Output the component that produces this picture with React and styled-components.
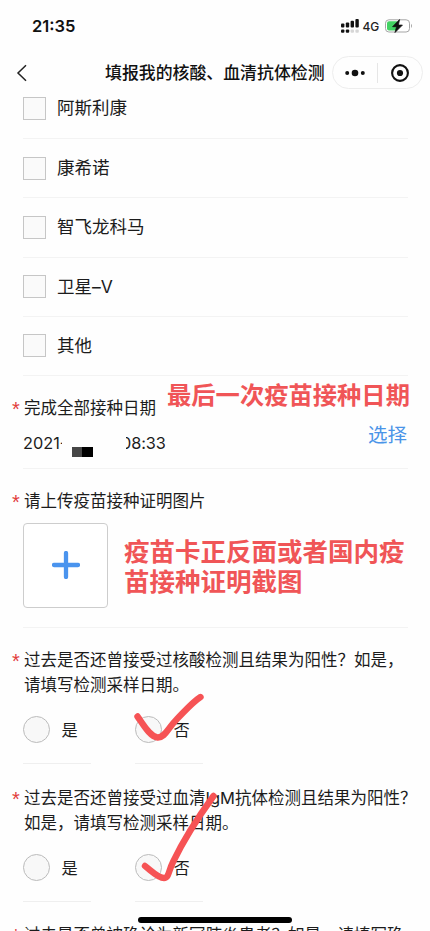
import React from "react";
import styled, { createGlobalStyle } from "styled-components";

const GlobalStyle = createGlobalStyle`
  * { box-sizing: border-box; }
  html, body { margin: 0; padding: 0; background: #fefefe; }
  body {
    font-family: Inter, "Noto Sans CJK SC", sans-serif;
    color: #1c1c1c;
    overflow: hidden;
  }
`;

const Screen = styled.div`
  position: relative;
  width: 430px;
  height: 931px;
  overflow: hidden;
  display: flex;
  flex-direction: column;
  background: #fefefe;
`;

const StatusBar = styled.header`
  flex: none;
  height: 52px;
  padding: 0 17px 0 32px;
  display: flex;
  align-items: center;
  justify-content: space-between;
`;

const Clock = styled.span`
  font-size: 16.5px;
  font-weight: 600;
  color: #111;
`;

const StatusIcons = styled.div`
  display: flex;
  align-items: center;
  height: 20px;
`;

const Network = styled.span`
  margin: 0 6px 0 4px;
  font-size: 12px;
  font-weight: 500;
  letter-spacing: -0.2px;
  color: #222;
`;

const NavBar = styled.nav`
  flex: none;
  height: 41px;
  padding: 0 7px 0 16px;
  display: flex;
  align-items: center;
`;

const BackIcon = styled.svg`
  flex: none;
  width: 12px;
  height: 18px;
`;

const Title = styled.h1`
  flex: none;
  width: 221px;
  margin: 0 6px 0 77px;
  font-size: 16.9px;
  line-height: 24px;
  font-weight: 500;
  color: #111;
  white-space: nowrap;
`;

const Capsule = styled.div`
  flex: none;
  width: 91px;
  height: 33px;
  border: 1px solid #ededed;
  border-radius: 17px;
  display: flex;
  align-items: center;
`;

const CapsuleButton = styled.button`
  flex: 1;
  height: 20px;
  padding: 0;
  border: 0;
  border-left: ${(p) => (p.$divided ? "1px solid #e6e6e6" : "0")};
  background: none;
  display: flex;
  align-items: center;
  justify-content: center;
`;

const OptionRow = styled.label`
  flex: none;
  height: ${(p) => (p.$first ? 46 : 59.25)}px;
  margin: 0 22px 0 23px;
  padding-bottom: ${(p) => (p.$first ? 15 : 0)}px;
  border-bottom: 1px solid #f3f3f3;
  display: flex;
  align-items: center;
  gap: 11px;
`;

const CheckBox = styled.span`
  flex: none;
  width: 23px;
  height: 23px;
  border: 1px solid #c6c6c6;
  background: #fafafa;
`;

const OptionText = styled.span`
  font-size: 17.5px;
  line-height: 26px;
  white-space: nowrap;
`;

const Section = styled.section`
  flex: none;
  position: relative;
  height: ${(p) => p.$height}px;
  padding: ${(p) => p.$top}px 22px 0 23px;
`;

const Rule = styled.hr`
  flex: none;
  width: 385px;
  height: 1px;
  margin: 0 0 0 23px;
  border: 0;
  background: #f3f3f3;
`;

const Question = styled.div`
  display: flex;
  margin-left: -11px;
  font-size: 16.5px;
  line-height: 25px;
  white-space: nowrap;
`;

const Star = styled.span`
  flex: none;
  width: 12px;
  height: 25px;
  color: #e23c3c;
  font-family: "Liberation Sans", sans-serif;
  font-size: 20px;
  line-height: 26px;
`;

const DateRow = styled.div`
  display: flex;
  align-items: center;
  height: 28px;
  margin-top: 8px;
  font-size: 16.3px;
`;

const Year = styled.span`
  width: 49px;
  overflow: hidden;
  white-space: nowrap;
  clip-path: inset(0 10px 0 0);
`;

const Mosaic = styled.span`
  width: 21px;
  height: 10px;
  margin-top: 17px;
  background: linear-gradient(90deg, #464646 50%, #000 50%);
`;

const Time = styled.span`
  margin-left: 28px;
  clip-path: inset(0 0 0 5px);
  letter-spacing: -0.1px;
`;

const Pick = styled.a`
  margin: -17px 1px 0 auto;
  color: #4a94e8;
  font-size: 19.5px;
  line-height: 28px;
`;

const Note = styled.p`
  position: absolute;
  margin: 0;
  left: ${(p) => p.$x}px;
  top: ${(p) => p.$y}px;
  font-size: ${(p) => p.$size}px;
  line-height: 30px;
  font-weight: 700;
  color: #f05557;
  white-space: nowrap;
`;

const Upload = styled.button`
  display: flex;
  align-items: center;
  justify-content: center;
  width: 85px;
  height: 85px;
  margin-top: 9px;
  padding: 0 0 1px;
  border: 1px solid #cdcdcd;
  border-radius: 4px;
  background: #fff;
`;

const Choices = styled.div`
  display: flex;
  gap: 44px;
  margin-top: 12px;
`;

const Choice = styled.label`
  width: 68px;
  height: 54px;
  padding-top: 6px;
  border-bottom: 1px solid #efefef;
  display: flex;
  gap: 11.5px;
  font-size: 16.2px;
  line-height: 28px;
`;

const Radio = styled.span`
  flex: none;
  width: 27px;
  height: 27px;
  border: 1px solid #bbb;
  border-radius: 50%;
  background: #f8f8f8;
`;

const Tick = styled.svg`
  position: absolute;
  left: 130px;
  top: ${(p) => p.$y}px;
  width: 95px;
  height: ${(p) => p.$h}px;
  overflow: visible;
  pointer-events: none;
`;

const HomeBar = styled.div`
  position: absolute;
  left: 138px;
  top: 917px;
  width: 154px;
  height: 5.5px;
  border-radius: 3px;
  background: #000;
`;

const OPTIONS = ["阿斯利康", "康希诺", "智飞龙科马", "卫星–V", "其他"];

function Signal() {
  const bars = [
    [0, 4.6, 4],
    [4.8, 3.4, 5.2],
    [9.6, 1.7, 6.9],
    [14.4, 0, 8.6],
  ];
  return (
    <svg width="18" height="15" viewBox="0 0 18 15">
      {bars.map(([x, y, h], i) => (
        <g key={x}>
          <rect x={x} y={y} width="3.4" height={h} rx="1" fill="#111" />
          <rect x={x} y="10.5" width="3.4" height="3.2" rx="1" fill={i < 2 ? "#111" : "#d6d6d6"} />
        </g>
      ))}
    </svg>
  );
}

function Battery() {
  return (
    <svg width="28" height="14" viewBox="0 0 28 14">
      <rect x="0.5" y="0.8" width="24" height="12.2" rx="3.4" fill="#fff" stroke="#a5a5a5" />
      <path d="M4 2.3H12V11.5H4Q2 11.5 2 9.5V4.3Q2 2.3 4 2.3Z" fill="#43d263" />
      <path d="M26 4.8Q28 6.9 26 9Z" fill="#a5a5a5" />
      <path d="M14.5 .6L7.6 7.7H11.6L10 13.5L17.4 6.1H13.4Z" fill="#111" stroke="#111" strokeWidth=".8" strokeLinejoin="round" />
    </svg>
  );
}

function YesNo({ lines }) {
  return (
    <>
      <Question>
        <Star>*</Star>
        <div>
          {lines.map((line) => (
            <div key={line}>{line}</div>
          ))}
        </div>
      </Question>
      <Choices>
        {["是", "否"].map((text) => (
          <Choice key={text}>
            <Radio />
            {text}
          </Choice>
        ))}
      </Choices>
    </>
  );
}

export default function App() {
  return (
    <Screen>
      <GlobalStyle />
      <StatusBar>
        <Clock>21:35</Clock>
        <StatusIcons>
          <Signal />
          <Network>4G</Network>
          <Battery />
        </StatusIcons>
      </StatusBar>
      <NavBar>
        <BackIcon viewBox="0 0 12 18">
          <path d="M10 1.2L2 9L10 16.8" fill="none" stroke="#222" strokeWidth="1.5" />
        </BackIcon>
        <Title>填报我的核酸、血清抗体检测</Title>
        <Capsule>
          <CapsuleButton>
            <svg width="20" height="8" viewBox="0 0 20 8">
              <circle cx="2.2" cy="4" r="2" fill="#111" />
              <circle cx="10" cy="4" r="3.3" fill="#111" />
              <circle cx="17.8" cy="4" r="2" fill="#111" />
            </svg>
          </CapsuleButton>
          <CapsuleButton $divided>
            <svg width="20" height="20" viewBox="0 0 20 20">
              <circle cx="10" cy="10" r="7.9" fill="none" stroke="#111" strokeWidth="2.1" />
              <circle cx="10" cy="10" r="3.1" fill="#111" />
            </svg>
          </CapsuleButton>
        </Capsule>
      </NavBar>

      {OPTIONS.map((name, i) => (
        <OptionRow key={name} $first={i === 0}>
          <CheckBox />
          <OptionText>{name}</OptionText>
        </OptionRow>
      ))}

      <Section $height={92} $top={20}>
        <Question>
          <Star>*</Star>完成全部接种日期
        </Question>
        <DateRow>
          <Year>2021-</Year>
          <Mosaic />
          <Time>08:33</Time>
          <Pick>选择</Pick>
        </DateRow>
        <Note $x={167} $y={4} $size={24.3}>最后一次疫苗接种日期</Note>
      </Section>
      <Rule />

      <Section $height={158} $top={20}>
        <Question>
          <Star>*</Star>请上传疫苗接种证明图片
        </Question>
        <Upload>
          <svg width="28" height="28" viewBox="0 0 28 28">
            <path d="M14 2V26M2 14H26" stroke="#4a94ee" strokeWidth="4.3" strokeLinecap="round" />
          </svg>
        </Upload>
        <Note $x={124} $y={67.5} $size={25.5}>
          疫苗卡正反面或者国内疫
          <br />
          苗接种证明截图
        </Note>
      </Section>
      <Rule />

      <Section $height={137} $top={20}>
        <YesNo lines={["过去是否还曾接受过核酸检测且结果为阳性？如是，", "请填写检测采样日期。"]} />
        <Tick $y={64} $h={60} viewBox="0 0 95 60">
          <path
            d="M7.5 24.5C13 32 19.5 44.5 27.5 45.5C35 46 38 36 47 27C54 20 62 10.5 70.5 5"
            fill="none"
            stroke="#f65355"
            strokeWidth="6.4"
            strokeLinecap="round"
            strokeLinejoin="round"
          />
        </Tick>
      </Section>

      <Section $height={137.5} $top={20.5}>
        <YesNo lines={["过去是否还曾接受过血清IgM抗体检测且结果为阳性？", "如是，请填写检测采样日期。"]} />
        <Tick $y={26} $h={100} viewBox="0 0 95 100">
          <path
            d="M15 75C21 79.5 28 87 34 87C39 87 38 81 43 71C54 48 69 25 83.5 5"
            fill="none"
            stroke="#f65355"
            strokeWidth="6.4"
            strokeLinecap="round"
            strokeLinejoin="round"
          />
        </Tick>
      </Section>

      <Section $height={60} $top={20}>
        <Question>
          <Star>*</Star>过去是否曾被确诊为新冠肺炎患者？如是，请填写确
        </Question>
      </Section>
      <HomeBar />
    </Screen>
  );
}
